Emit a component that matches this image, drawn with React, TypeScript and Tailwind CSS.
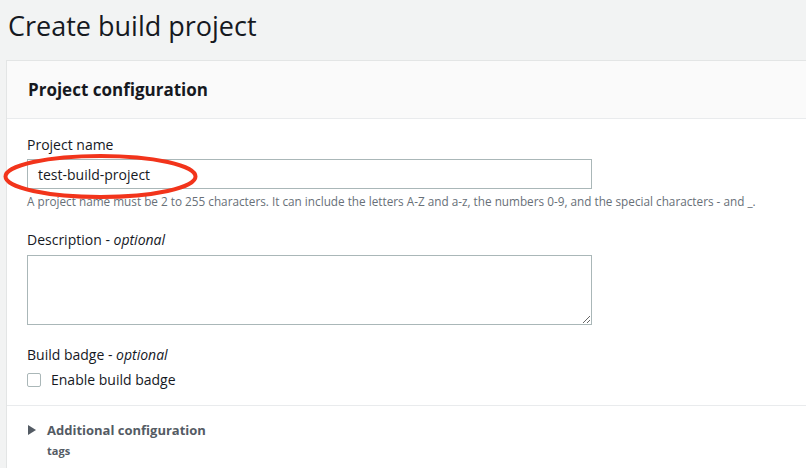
import React from 'react';

// Create build project – project configuration card

const font = { fontFamily: '"Open Sans", "Liberation Sans", sans-serif' };

export default function App() {
  return (
    <div className="min-h-[468px] w-[806px] overflow-hidden bg-[#f2f3f3] text-[#16191f]" style={font}>
      <h1 className="pl-[8px] pt-[8px] text-[27px] leading-[36px] font-normal text-[#16191f]">Create build project</h1>

      <div className="relative ml-[6px] mt-[16px] border-l border-t border-[#e3e5e5] bg-white">
        <div className="flex h-[58px] items-center border-b border-[#e9ebed] bg-[#fafafa] pl-[21px]">
          <h2 className="text-[17px] font-bold leading-[22px] text-[#16191f]">Project configuration</h2>
        </div>

        <div className="flex flex-col px-[20px] pt-[16px]">
          <label className="text-[14px] leading-[20px] text-[#16191f]">Project name</label>
          <div className="mt-[4px] flex h-[30px] w-[565px] items-center border border-[#aab7b8] bg-white pl-[10px] text-[14px] text-[#16191f]">
            test-build-project
          </div>
          <p className="mt-[4px] text-[11.75px] leading-[16px] text-[#687078]">
            A project name must be 2 to 255 characters. It can include the letters A-Z and a-z, the numbers 0-9, and the special characters - and _.
          </p>

          <label className="mt-[21px] text-[14px] leading-[20px]">
            Description - <i>optional</i>
          </label>
          <textarea
            readOnly
            className="mt-[5px] h-[70px] w-[565px] resize border border-[#aab7b8] bg-white outline-none"
          />

          <label className="mt-[20px] text-[14px] leading-[20px]">
            Build badge - <i>optional</i>
          </label>
          <div className="mt-[5px] flex items-center gap-[10px]">
            <span className="h-[14px] w-[14px] rounded-[2px] border border-[#aab7b8] bg-white" />
            <span className="text-[14px] leading-[20px]">Enable build badge</span>
          </div>
        </div>

        <div className="mt-[15px] border-t border-[#e9ebed] px-[21px] pt-[14px] pb-[12px]">
          <div className="flex items-center gap-[11px]">
            <svg width="8" height="10" viewBox="0 0 8 10">
              <path d="M0 0 L8 5 L0 10 Z" fill="#545b64" />
            </svg>
            <span className="text-[13px] font-bold leading-[20px] text-[#545b64]">Additional configuration</span>
          </div>
          <div className="mt-[3px] pl-[19px] text-[11px] font-bold leading-[16px] text-[#545b64]">tags</div>
        </div>

        {/* red highlight around project name */}
        <svg className="pointer-events-none absolute left-[-6px] top-[88px]" width="206" height="56" viewBox="0 0 206 56">
          <ellipse cx="99.5" cy="27.5" rx="95" ry="20.5" fill="none" stroke="#f2341b" strokeWidth="4" />
        </svg>
      </div>
    </div>
  );
}
